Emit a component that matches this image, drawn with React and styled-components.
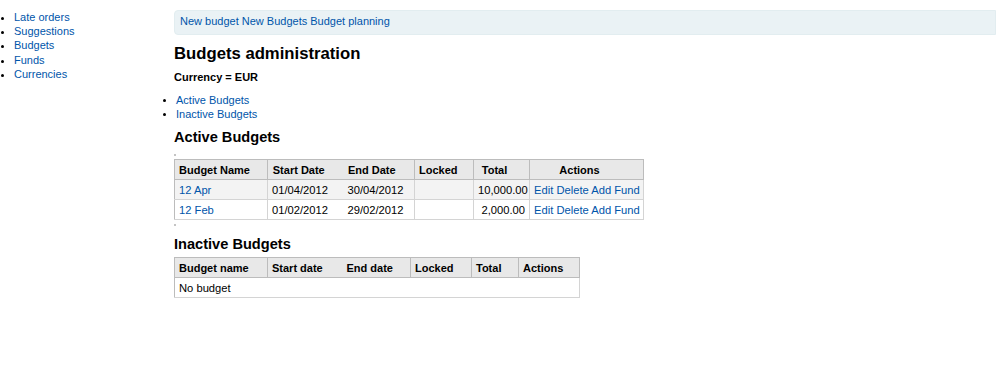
import React from "react";
import styled, { createGlobalStyle } from "styled-components";

const Global = createGlobalStyle`
  html, body { margin: 0; padding: 0; background: #fff; }
  body { font-family: "Liberation Sans", Arial, sans-serif; font-size: 11px; color: #000; }
  a { color: #0055aa; text-decoration: none; }
`;

const Page = styled.div`
  display: flex;
  align-items: flex-start;
  width: 997px;
`;

const Sidebar = styled.nav`
  width: 174px;
  flex: none;
  padding-top: 10px;
`;

const NavList = styled.ul`
  margin: 0;
  padding-left: 14px;
  line-height: 14.2px;
  list-style: disc;
`;

const Main = styled.main`
  flex: 1;
  padding: 10px 1px 0 0;
  min-width: 0;
`;

const Toolbar = styled.div`
  height: 25px;
  box-sizing: border-box;
  background: #eaf2f5;
  border: 1px solid #e2edf0;
  border-radius: 4px 0 0 4px;
  padding: 3px 5px 0 5px;
  line-height: 14px;
`;

const Title = styled.h1`
  font-size: 16.7px;
  line-height: 20px;
  font-weight: bold;
  margin: 8.5px 0 0;
`;

const Currency = styled.p`
  font-weight: bold;
  line-height: 14px;
  margin: 6.7px 0 0;
`;

const AnchorList = styled.ul`
  margin: 9px 0 0;
  padding-left: 2px;
  line-height: 14px;
  list-style: disc;
  li::marker { font-size: 10px; }
`;

const SectionTitle = styled.h2`
  font-size: 14.6px;
  line-height: 18px;
  font-weight: bold;
  margin: ${(p) => p.$top}px 0 0;
`;

const Dot = styled.div`
  width: 2px;
  height: 2px;
  background: #c4c4c4;
  margin-top: ${(p) => p.$top}px;
`;

const Table = styled.table`
  border-collapse: collapse;
  table-layout: fixed;
  width: ${(p) => p.$width}px;
  margin-top: ${(p) => p.$top}px;
  border: 1px solid #bcbcbc;
  line-height: 14px;
`;

const Th = styled.th`
  background: #e8e8e8;
  font-weight: bold;
  text-align: ${(p) => (p.$center ? "center" : "left")};
  padding: ${(p) => (p.$center ? "3px 18px 2px 4px" : "3px 4px 2px 4px")};
  border-bottom: 1px solid #bcbcbc;
  border-right: ${(p) => (p.$open ? "none" : "1px solid #bcbcbc")};
  white-space: nowrap;
  overflow: visible;
`;

const Tr = styled.tr`
  background: ${(p) => (p.$odd ? "#f3f3f3" : "#fff")};
`;

const Td = styled.td`
  padding: 3px 4px 2px 4px;
  font-size: 11.2px;
  text-align: ${(p) => (p.$right ? "right" : "left")};
  border-bottom: 1px solid #d4d4d4;
  border-right: ${(p) => (p.$open ? "none" : "1px solid #d4d4d4")};
  white-space: nowrap;
`;

const activeCols = [
  { label: "Budget Name", w: 93 },
  { label: "Start Date", w: 76, open: true },
  { label: "End Date", w: 71 },
  { label: "Locked", w: 59 },
  { label: "Total", w: 56 },
  { label: "Actions", w: 114 },
];

const inactiveCols = [
  { label: "Budget name", w: 93 },
  { label: "Start date", w: 75, open: true },
  { label: "End date", w: 68 },
  { label: "Locked", w: 61 },
  { label: "Total", w: 47 },
  { label: "Actions", w: 61 },
];

const budgets = [
  { name: "12 Apr", start: "01/04/2012", end: "30/04/2012", total: "10,000.00" },
  { name: "12 Feb", start: "01/02/2012", end: "29/02/2012", total: "2,000.00" },
];

export default function App() {
  return (
    <>
      <Global />
      <Page>
        <Sidebar>
          <NavList>
            <li><a href="#">Late orders</a></li>
            <li><a href="#">Suggestions</a></li>
            <li><a href="#">Budgets</a></li>
            <li><a href="#">Funds</a></li>
            <li><a href="#">Currencies</a></li>
          </NavList>
        </Sidebar>
        <Main>
          <Toolbar>
            <a href="#">New budget</a> <a href="#">New Budgets</a> <a href="#">Budget planning</a>
          </Toolbar>
          <Title>Budgets administration</Title>
          <Currency>Currency = EUR</Currency>
          <AnchorList>
            <li><a href="#">Active Budgets</a></li>
            <li><a href="#">Inactive Budgets</a></li>
          </AnchorList>
          <SectionTitle $top={7}>Active Budgets</SectionTitle>
          <Dot $top={8} />
          <Table $width={469} $top={3}>
            <colgroup>
              {activeCols.map((c) => <col key={c.label} style={{ width: c.w }} />)}
            </colgroup>
            <thead>
              <tr>
                {activeCols.map((c) => (
                  <Th key={c.label} $center $open={c.open}>{c.label}</Th>
                ))}
              </tr>
            </thead>
            <tbody>
              {budgets.map((b, i) => (
                <Tr key={b.name} $odd={i % 2 === 0}>
                  <Td><a href="#">{b.name}</a></Td>
                  <Td $open>{b.start}</Td>
                  <Td>{b.end}</Td>
                  <Td></Td>
                  <Td $right>{b.total}</Td>
                  <Td>
                    <a href="#">Edit</a> <a href="#">Delete</a> <a href="#">Add Fund</a>
                  </Td>
                </Tr>
              ))}
            </tbody>
          </Table>
          <Dot $top={4} />
          <SectionTitle $top={9}>Inactive Budgets</SectionTitle>
          <Table $width={405} $top={4}>
            <colgroup>
              {inactiveCols.map((c) => <col key={c.label} style={{ width: c.w }} />)}
            </colgroup>
            <thead>
              <tr>
                {inactiveCols.map((c) => (
                  <Th key={c.label} $open={c.open}>{c.label}</Th>
                ))}
              </tr>
            </thead>
            <tbody>
              <Tr>
                <Td colSpan={6}>No budget</Td>
              </Tr>
            </tbody>
          </Table>
        </Main>
      </Page>
    </>
  );
}
